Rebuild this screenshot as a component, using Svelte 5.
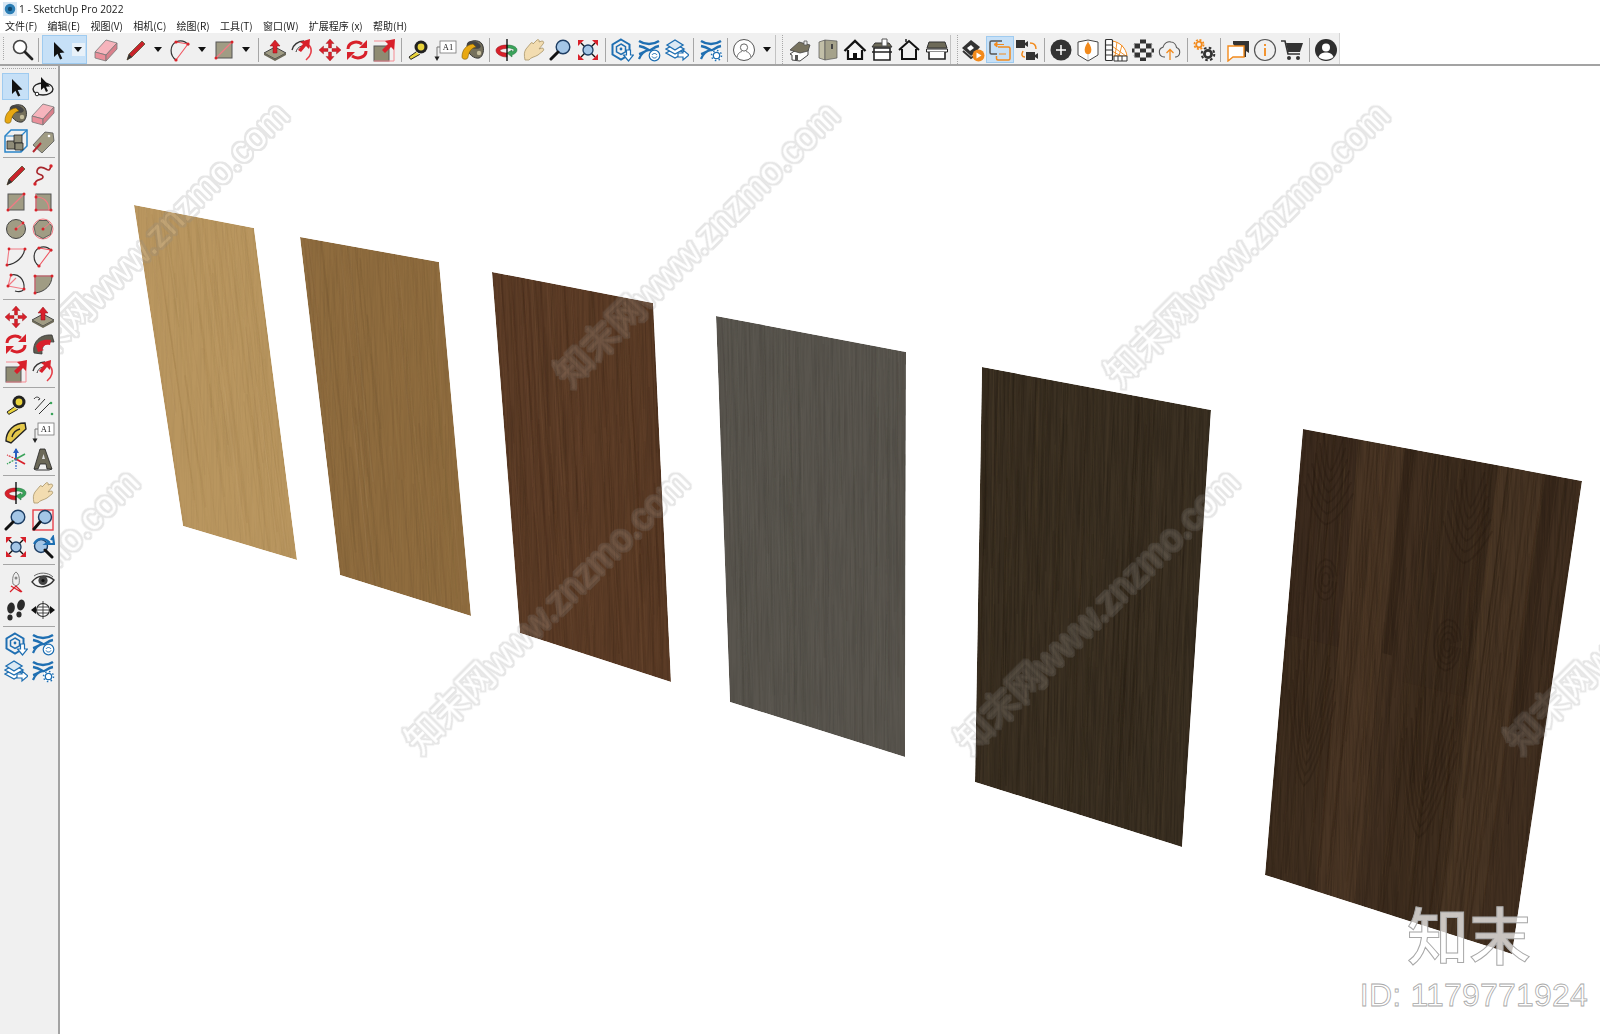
<script>
  const menus = ['文件(F)', '编辑(E)', '视图(V)', '相机(C)', '绘图(R)', '工具(T)', '窗口(W)', '扩展程序 (x)', '帮助(H)'];

  // '|' thin separator, '||' toolbar break, 'name+' has a dropdown caret
  const topbar = [
    'search', '|', 'select*', 'gap', 'eraser', 'nudge', 'pencil+', 'arcpie+', 'rect+', '|',
    'pushpull', 'followme', 'move', 'rotate', 'scale', '|',
    'tape', 'text', 'paint', '|',
    'orbit', 'hand', 'zoom', 'extents', '|',
    'wh', 'extx', 'layers', '|', 'extgear', '|', 'user+', '||',
    'house3d', 'slab', 'blackhouse', 'taghouse', 'outlinehouse', 'box', '|||',
    'eyeplay', 'swap!', 'cams', '|',
    'plus', 'shield', 'swatch', 'checker', 'cloud', '|',
    'gears', '|',
    'chat', 'info', 'cart', '|', 'avatar'
  ];

  const sidebar = [
    [['arrow', 'lookorbit'], ['paint', 'eraser'], ['component', 'tag']],
    [['pencil', 'freehand'], ['rect', 'rotrect'], ['circle', 'polygon'], ['arc2', 'arcpie'], ['arc3', 'pie']],
    [['move', 'pushpull'], ['rotate', 'followbody'], ['scale', 'followme']],
    [['tape', 'dim'], ['protractor', 'text'], ['axes', 'text3d']],
    [['orbit', 'hand'], ['zoom', 'zoomwin'], ['extents', 'prev']],
    [['walk', 'eye'], ['steps', 'section']],
    [['wh', 'extx'], ['layers', 'extgear']]
  ];

  function parse(item) {
    return { name: item.replace(/[+*!]/, ''), caret: item.endsWith('+'), active: item.endsWith('!') };
  }

  function random(seed) {
    let s = seed;
    return () => {
      s = (s + 0x6d2b79f5) | 0;
      let t = Math.imul(s ^ (s >>> 15), 1 | s);
      t = (t + Math.imul(t ^ (t >>> 7), 61 | t)) ^ t;
      return ((t ^ (t >>> 14)) >>> 0) / 4294967296;
    };
  }

  // bilinear position inside a panel: tl, tr, br, bl
  function at(q, u, v) {
    const tx = q[0][0] + (q[1][0] - q[0][0]) * u;
    const ty = q[0][1] + (q[1][1] - q[0][1]) * u;
    const bx = q[3][0] + (q[2][0] - q[3][0]) * u;
    const by = q[3][1] + (q[2][1] - q[3][1]) * u;
    return [tx + (bx - tx) * v, ty + (by - ty) * v];
  }

  function line(q, pts) {
    return pts.map((p, i) => (i ? 'L' : 'M') + at(q, p[0], p[1]).map((n) => n.toFixed(1)).join(' ')).join('');
  }

  function streaks(q, seed, count, dark, light, strength) {
    const r = random(seed);
    const out = [];
    for (let i = 0; i < count; i++) {
      const u = r();
      const v0 = r() < 0.5 ? 0 : r() * 0.7;
      const v1 = Math.min(1, v0 + 0.25 + r() * 0.8);
      const drift = (r() - 0.5) * 0.025;
      const pts = [];
      for (let k = 0; k <= 5; k++) {
        const t = k / 5;
        pts.push([u + drift * t + (r() - 0.5) * 0.005, v0 + (v1 - v0) * t]);
      }
      out.push({
        d: line(q, pts),
        color: r() < 0.65 ? dark : light,
        width: 0.4 + r() * 1.5,
        alpha: (0.06 + r() * 0.22) * strength
      });
    }
    return out;
  }

  function bandPath(q, u0, u1, v0, v1) {
    return line(q, [[u0, v0], [u1, v0], [u1, v1], [u0, v1]]) + 'Z';
  }

  const panels = [
    { id: 1, quad: [[134, 205], [254, 228], [297, 560], [183, 526]], base: '#b9965f', dark: '#94713f', light: '#cbab7b', n: 90, s: 0.6, grain: 0.03, seed: 11 },
    { id: 2, quad: [[300, 237], [439, 262], [471, 616], [340, 575]], base: '#8f6c3e', dark: '#6a4e2e', light: '#a1815a', n: 100, s: 0.65, grain: 0.05, seed: 27 },
    { id: 3, quad: [[492, 272], [653, 303], [671, 682], [520, 633]], base: '#5c3c26', dark: '#3f2717', light: '#704e36', n: 170, s: 0.9, grain: 0.1, seed: 43 },
    { id: 4, quad: [[716, 316], [906, 352], [905, 757], [730, 702]], base: '#59554e', dark: '#47443d', light: '#69655d', n: 190, s: 0.9, grain: 0.08, seed: 59 },
    { id: 5, quad: [[982, 367], [1211, 410], [1182, 847], [975, 782]], base: '#3b3022', dark: '#241c11', light: '#4e402d', n: 240, s: 1, grain: 0.16, seed: 71 },
    { id: 6, quad: [[1303, 429], [1582, 481], [1512, 954], [1265, 875]], base: '#412f20', dark: '#291c11', light: '#543f29', n: 220, s: 1, grain: 0.14, seed: 97 }
  ].map((p) => {
    const xs = p.quad.map((c) => c[0]);
    const ys = p.quad.map((c) => c[1]);
    return {
      ...p,
      points: p.quad.map((c) => c.join(',')).join(' '),
      box: { x: Math.min(...xs), y: Math.min(...ys), w: Math.max(...xs) - Math.min(...xs), h: Math.max(...ys) - Math.min(...ys) },
      lines: streaks(p.quad, p.seed, p.n, p.dark, p.light, p.s)
    };
  });

  // the walnut panel is laid in planks with cathedral figure
  const walnut = panels[5].quad;
  const planks = [
    { d: bandPath(walnut, 0, 0.2, 0, 0.46), fill: '#2f2216', alpha: 0.22 },
    { d: bandPath(walnut, 0.2, 0.36, 0, 1), fill: '#5f4a33', alpha: 0.26 },
    { d: bandPath(walnut, 0.365, 0.4, 0, 0.45), fill: '#20160c', alpha: 0.32 },
    { d: bandPath(walnut, 0.45, 0.7, 0, 0.5), fill: '#2b1f14', alpha: 0.22 },
    { d: bandPath(walnut, 0.7, 0.86, 0, 1), fill: '#5f4a33', alpha: 0.24 },
    { d: bandPath(walnut, 0.87, 0.91, 0, 0.55), fill: '#20160c', alpha: 0.3 },
    { d: bandPath(walnut, 0, 0.2, 0.46, 1), fill: '#382a1b', alpha: 0.18 },
    { d: bandPath(walnut, 0.45, 0.7, 0.5, 1), fill: '#2b1f14', alpha: 0.12 }
  ];

  function arches(uc, vTip, w, h, n) {
    const out = [];
    for (let k = 0; k < n; k++) {
      const wk = w * (0.35 + (k / n) * 0.65);
      const tip = vTip + k * 0.024;
      const pts = [];
      for (let s = -1; s <= 1.001; s += 0.2) {
        pts.push([uc + s * wk, tip - Math.pow(Math.abs(s), 1.6) * h]);
      }
      out.push(line(walnut, pts));
    }
    return out;
  }

  function knot(uc, vc, w, h, n) {
    const out = [];
    for (let k = 1; k <= n; k++) {
      const pts = [];
      for (let a = 0; a <= 6.3; a += 0.5) {
        pts.push([uc + Math.cos(a) * w * (k / n), vc + Math.sin(a) * h * (k / n)]);
      }
      out.push(line(walnut, pts));
    }
    return out;
  }

  const figure = [
    ...arches(0.11, 0.08, 0.1, 0.08, 6),
    ...arches(0.62, 0.1, 0.1, 0.08, 6),
    ...arches(0.12, 0.66, 0.1, 0.2, 6),
    ...arches(0.58, 0.7, 0.12, 0.2, 6),
    ...knot(0.13, 0.32, 0.04, 0.045, 3),
    ...knot(0.6, 0.4, 0.05, 0.055, 4)
  ];

  // watermark centres
  const marks = [
    [147, 244], [697, 244], [1247, 244],
    [-3, 611], [547, 611], [1097, 611], [1647, 611]
  ];
</script>

<svg class="defs" aria-hidden="true">
  <defs>
    <symbol id="search" viewBox="0 0 24 24"><circle cx="10" cy="9" r="6.5" fill="#fff" stroke="#444" stroke-width="1.6"/><path d="M15 14l7 7" stroke="#222" stroke-width="2.8" stroke-linecap="round"/></symbol>
    <symbol id="select" viewBox="0 0 24 24"><path d="M8 4v15l3.5-3.2 2.6 5.6 2.2-1-2.6-5.4 4.8-.4z" fill="#111"/></symbol>
    <symbol id="arrow" viewBox="0 0 24 24"><path d="M8 4v15l3.5-3.2 2.6 5.6 2.2-1-2.6-5.4 4.8-.4z" fill="#111"/></symbol>
    <symbol id="lookorbit" viewBox="0 0 24 24"><ellipse cx="12" cy="14" rx="10" ry="6" fill="none" stroke="#222" stroke-width="1.4"/><path d="M10 2v13l3-2.6 2 4.6 2-1-2-4.2 4-.4z" fill="#111"/><circle cx="6" cy="19" r="1.8" fill="#fff" stroke="#222"/></symbol>
    <symbol id="eraser" viewBox="0 0 24 24"><path d="M1 14 12 2l11 3-11 12z" fill="#f6b4bc" stroke="#777" stroke-width=".8"/><path d="M1 14l11 3v6L1 20z" fill="#ea8f9a" stroke="#777" stroke-width=".8"/><path d="M12 17 23 5v6L12 23z" fill="#d9808b" stroke="#777" stroke-width=".8"/></symbol>
    <symbol id="pencil" viewBox="0 0 24 24"><path d="M3 22l2-6L18 3l3 3L8 19z" fill="#c9232b" stroke="#553" stroke-width=".8"/><path d="M3 22l2-6 3 3z" fill="#333"/></symbol>
    <symbol id="freehand" viewBox="0 0 24 24"><path d="M4 21c0-6 8-3 8-7S5 13 6 8s6-4 9-2 4 1 5-3" fill="none" stroke="#a8262c" stroke-width="1.6"/><circle cx="4" cy="21" r="1.7" fill="#d8232a"/><circle cx="20" cy="3" r="1.7" fill="#d8232a"/></symbol>
    <symbol id="arcpie" viewBox="0 0 24 24"><path d="M8 22C1 17 2 7 8 4c4-2 9-1 13 3" fill="none" stroke="#333" stroke-width="1.2"/><path d="M8 22 20 6M8 4l12 2" stroke="#ef5560" stroke-width="1.1"/><circle cx="8" cy="22" r="1.6" fill="#d8232a"/><circle cx="8" cy="4" r="1.6" fill="#d8232a"/><circle cx="20" cy="6" r="1.6" fill="#d8232a"/></symbol>
    <symbol id="rect" viewBox="0 0 24 24"><rect x="4" y="4" width="16" height="16" fill="#a09c84" stroke="#555"/><path d="M4 20 20 4" stroke="#f27a84" stroke-width="1.2"/><circle cx="4" cy="20" r="1.5" fill="#d8232a"/><circle cx="20" cy="4" r="1.5" fill="#d8232a"/></symbol>
    <symbol id="rotrect" viewBox="0 0 24 24"><rect x="5" y="4" width="15" height="16" fill="#a09c84" stroke="#555"/><path d="M5 7c8 0 13 5 13 13M5 4v16h15" fill="none" stroke="#f27a84" stroke-width="1.2"/><circle cx="5" cy="7" r="1.5" fill="#d8232a"/><circle cx="5" cy="20" r="1.5" fill="#d8232a"/><circle cx="20" cy="20" r="1.5" fill="#d8232a"/></symbol>
    <symbol id="circle" viewBox="0 0 24 24"><circle cx="12" cy="12" r="9.5" fill="#a09c84" stroke="#444"/><path d="M12 12l7-6" stroke="#f27a84" stroke-width="1.2"/><circle cx="12" cy="12" r="1.5" fill="#d8232a"/><circle cx="19" cy="6" r="1.4" fill="#d8232a"/></symbol>
    <symbol id="polygon" viewBox="0 0 24 24"><circle cx="12" cy="12" r="10" fill="#e8dcd4" stroke="#f27a84"/><path d="M8 3.5l8 0 5 6-1.5 8-7.5 4-7.5-4-1.5-8z" fill="#a09c84" stroke="#444" stroke-width=".8"/><path d="M12 12l7-6" stroke="#f27a84"/><circle cx="12" cy="12" r="1.5" fill="#d8232a"/></symbol>
    <symbol id="arc2" viewBox="0 0 24 24"><path d="M3 21C12 20 20 13 21 4" fill="none" stroke="#333" stroke-width="1.2"/><path d="M3 21 5 5h16" fill="none" stroke="#f27a84" stroke-width="1.1"/><circle cx="3" cy="21" r="1.5" fill="#d8232a"/><circle cx="5" cy="5" r="1.4" fill="#d8232a"/><circle cx="21" cy="5" r="1.5" fill="#d8232a"/></symbol>
    <symbol id="arc3" viewBox="0 0 24 24"><path d="M7 4c7-2 14 4 13 14-2 3-6 3-9 2" fill="none" stroke="#333" stroke-width="1.2"/><path d="M4 15 7 4M4 15l16 3M4 15l8-8" stroke="#f27a84" stroke-width="1.1"/><circle cx="7" cy="4" r="1.5" fill="#d8232a"/><circle cx="4" cy="15" r="1.5" fill="#d8232a"/><circle cx="20" cy="18" r="1.5" fill="#d8232a"/></symbol>
    <symbol id="pie" viewBox="0 0 24 24"><path d="M4 5h17c0 9-7 16-17 17z" fill="#a09c84" stroke="#444"/><path d="M4 5h17M4 5v17" stroke="#f27a84" stroke-width="1.1"/><circle cx="4" cy="5" r="1.5" fill="#d8232a"/><circle cx="21" cy="5" r="1.5" fill="#d8232a"/><circle cx="4" cy="22" r="1.5" fill="#d8232a"/></symbol>
    <symbol id="pushpull" viewBox="0 0 24 24"><path d="M1 15l11-6 11 6-11 6z" fill="#a09c84" stroke="#444"/><path d="M1 15v2l11 6 11-6v-2l-11 6z" fill="#6d6a58"/><path d="M12 2l5 6h-3v7h-4V8H7z" fill="#d8202a" stroke="#8d1018" stroke-width=".5"/></symbol>
    <symbol id="followme" viewBox="0 0 24 24"><path d="M2 12C3 7 8 3 14 3" fill="none" stroke="#333" stroke-width="1.3"/><path d="M6 14c1-4 4-6 7-6" fill="none" stroke="#333"/><path d="M19 7c4 5 2 11-3 15" fill="none" stroke="#e6404a" stroke-width="1.6"/><path d="M20 1l-1 10-3-3-5 6-3-2 5-6-3-2z" fill="#d8202a"/></symbol>
    <symbol id="followbody" viewBox="0 0 24 24"><path d="M3 21C1 10 9 2 21 3l2 7C15 9 10 14 11 22z" fill="#5f5d50" stroke="#333" stroke-width=".8"/><path d="M5 14c2-4 6-7 15-6l-1 5c-5-1-7 1-8 4l2 1-6 2z" fill="#d8202a"/></symbol>
    <symbol id="move" viewBox="0 0 24 24"><g fill="#d8202a" stroke="#93131a" stroke-width=".4"><path d="M12 1l4 4.500h-2.500v4.500h-3V5.500H8z"/><path d="M12 1l4 4.500h-2.500v4.500h-3V5.500H8z" transform="rotate(90 12 12)"/><path d="M12 1l4 4.500h-2.500v4.500h-3V5.500H8z" transform="rotate(180 12 12)"/><path d="M12 1l4 4.500h-2.500v4.500h-3V5.500H8z" transform="rotate(270 12 12)"/></g></symbol>
    <symbol id="rotate" viewBox="0 0 24 24"><g fill="#d8202a"><path d="M3 11c0-6 8-9 14-5" fill="none" stroke="#d8202a" stroke-width="3"/><path d="M22 2v8h-8z"/><path d="M21 13c0 6-8 9-14 5" fill="none" stroke="#d8202a" stroke-width="3"/><path d="M2 22v-8h8z"/></g></symbol>
    <symbol id="scale" viewBox="0 0 24 24"><rect x="2" y="8" width="15" height="15" fill="#8e8b72" stroke="#555"/><path d="M2 3h20v20H2" fill="none" stroke="#f58a92" stroke-width="1"/><path d="M23 1l-1 11-3-3-6 6-3-3 6-6-3-3z" fill="#d8202a"/></symbol>
    <symbol id="tape" viewBox="0 0 24 24"><circle cx="15" cy="9" r="6.5" fill="#222"/><circle cx="15" cy="9" r="3.4" fill="#e9d33b"/><path d="M10 14l-7 5 1.8 2.4 9-5" fill="#e9d33b" stroke="#222" stroke-width="1"/></symbol>
    <symbol id="text" viewBox="0 0 24 24"><rect x="7" y="3" width="16" height="12" fill="#fff" stroke="#777" stroke-width=".8"/><text x="15" y="12.4" font-family="Liberation Serif, serif" font-size="8.5" text-anchor="middle" fill="#222">A1</text><path d="M4 9h3M4 9v10" stroke="#777" fill="none"/><path d="M1.5 18.5h5L4 23z" fill="#222"/></symbol>
    <symbol id="paint" viewBox="0 0 24 24"><path d="M6 7c2-5 12-6 15-1s1 13-3 14-12-3-12-13z" fill="#75705c" stroke="#333"/><ellipse cx="13" cy="7" rx="7" ry="3.5" fill="#444" transform="rotate(15 13 7)"/><path d="M1 19C1 12 5 7 12 6l3 3c-5 1-7 5-8 10 0 3-6 3-6 0z" fill="#e8a812" stroke="#7a5b07" stroke-width=".6"/><circle cx="18" cy="15" r="2.2" fill="#c4bd9c"/></symbol>
    <symbol id="orbit" viewBox="0 0 24 24"><path d="M12 7c6 0 10 2 10 5 0 2-2 4-5 5v2l-5-4 5-3v2c1-1 2-1 2-2 0-1-3-2-7-2z" fill="#3aa35a" stroke="#1f6e38" stroke-width=".5"/><path d="M12 7C6 7 1 9 1 12.500S6 19 12 19v-4c-3 0-7-1-7-2.500 0-1 3-2 7-2z" fill="#d8202a" stroke="#8d1018" stroke-width=".5"/><path d="M12 1v22" stroke="#111" stroke-width="1.400"/></symbol>
    <symbol id="hand" viewBox="0 0 24 24"><path d="M3 22C2 17 2 14 4 11l5-6c1-1 2 0 2 1l4-4c1-1 3 0 2 2l3-1c2 0 2 2 1 3l-4 5 3-1c2 0 2 2 1 3l-5 4c-3 2-7 2-9 5z" fill="#f2dcb0" stroke="#a89468" stroke-width=".8"/></symbol>
    <symbol id="zoom" viewBox="0 0 24 24"><circle cx="14" cy="9" r="6.8" fill="#a4c6e6" stroke="#1d3d63" stroke-width="1.4"/><path d="M9 14l-7 7" stroke="#111" stroke-width="3" stroke-linecap="round"/></symbol>
    <symbol id="zoomwin" viewBox="0 0 24 24"><rect x="2" y="2" width="20" height="20" fill="none" stroke="#e6404a" stroke-width="1.4"/><circle cx="14" cy="9" r="6.5" fill="#a4c6e6" stroke="#1d3d63" stroke-width="1.4"/><path d="M9 14l-6 7" stroke="#111" stroke-width="3" stroke-linecap="round"/></symbol>
    <symbol id="extents" viewBox="0 0 24 24"><path d="M5 5l14 14M19 5 5 19" stroke="#111" stroke-width="1.4"/><circle cx="12" cy="12" r="5" fill="#a4c6e6" stroke="#1d3d63" stroke-width="1.3"/><g fill="#d8202a"><path d="M2 2h6L2 8z"/><path d="M22 2h-6l6 6z"/><path d="M2 22h6l-6-6z"/><path d="M22 22h-6l6-6z"/></g></symbol>
    <symbol id="prev" viewBox="0 0 24 24"><circle cx="10" cy="11" r="6.5" fill="#a4c6e6" stroke="#1d3d63" stroke-width="1.4"/><path d="M14 15l7 7" stroke="#111" stroke-width="3" stroke-linecap="round"/><path d="M3 9C6 3 13 2 18 7l-3 2h8l-1-7-2 3" fill="none" stroke="#1d6fb2" stroke-width="2.2"/></symbol>
    <symbol id="wh" viewBox="0 0 24 24"><path d="M11 1.5l8.5 5v10L11 21.5l-8.5-5v-10z" fill="none" stroke="#1f6fb2" stroke-width="2"/><path d="M11 6l4.500 2.600v5.200L11 16.500l-4.500-2.700V8.600z" fill="none" stroke="#1f6fb2" stroke-width="1.500"/><circle cx="11" cy="11" r="1.400" fill="#1f6fb2"/><path d="M16.500 12h4v5h3l-5 6-5-6h3z" fill="#fff" stroke="#1f6fb2" stroke-width="1.200"/></symbol>
    <symbol id="extx" viewBox="0 0 24 24"><g fill="none" stroke="#1f6fb2"><path d="M2 3c6 4 14 4 20 0" stroke-width="2.400"/><path d="M2 8c6 1 8 3 10 4s4-3 10-4" stroke-width="2.400"/><path d="M2 21c2-5 5-8 10-9-5 1-6 3-10 4" stroke-width="2.200"/></g><circle cx="17.500" cy="17.500" r="5.300" fill="#fff" stroke="#1f6fb2" stroke-width="1.200"/><path d="M15 17c1-2 4-2 5 0M20 18.500c-1 2-4 2-5 0" fill="none" stroke="#1f6fb2"/></symbol>
    <symbol id="extgear" viewBox="0 0 24 24"><g fill="none" stroke="#1f6fb2"><path d="M2 3c6 4 14 4 20 0" stroke-width="2.400"/><path d="M2 8c6 1 8 3 10 4s4-3 10-4" stroke-width="2.400"/><path d="M2 21c2-5 5-8 10-9-5 1-6 3-10 4" stroke-width="2.200"/></g><circle cx="17.500" cy="17.500" r="5.800" fill="#fff"/><circle cx="17.500" cy="17.500" r="3.200" fill="#fff" stroke="#1f6fb2" stroke-width="1.300"/><circle cx="17.500" cy="17.500" r="5" fill="none" stroke="#1f6fb2" stroke-width="1.500" stroke-dasharray="1.600 2.300"/></symbol>
    <symbol id="layers" viewBox="0 0 24 24"><g fill="#fff" stroke="#1f6fb2" stroke-width="1.400"><path d="M1 15l9-5 9 5-9 5z"/><path d="M1 11l9-5 9 5-9 5z"/><path d="M2 7l8-5 8 5-8 5z" fill="#dbe9f4"/></g><path d="M13 15h5v-3l6 5-6 5v-3h-5z" fill="#fff" stroke="#1f6fb2" stroke-width="1.200"/></symbol>
    <symbol id="user" viewBox="0 0 24 24"><circle cx="12" cy="12" r="10.500" fill="#fff" stroke="#555" stroke-width="1"/><circle cx="12" cy="9.500" r="3.600" fill="none" stroke="#666"/><path d="M5 19c1-4 3-5 5-5.500M19 19c-1-4-3-5-5-5.500" fill="none" stroke="#666"/></symbol>
    <symbol id="house3d" viewBox="0 0 24 24"><path d="M8 12l-6 4 2 1v5l8 1 8-6v-6z" fill="#fff" stroke="#444"/><path d="M2 12 11 4l11 3-2 6-8 2z" fill="#77725e" stroke="#444" stroke-width=".8"/><path d="M16 3h3v4h-3z" fill="#eee" stroke="#555" stroke-width=".8"/><path d="M7 17h3v5H7z" fill="#555"/></symbol>
    <symbol id="slab" viewBox="0 0 24 24"><path d="M3 4l6-2v20l-6-2z" fill="#c2bfa8" stroke="#555" stroke-width=".7"/><path d="M9 2l12 1v17l-12 2z" fill="#a5a28b" stroke="#555" stroke-width=".7"/><path d="M15 6h2v5h-2z" fill="#444"/></symbol>
    <symbol id="blackhouse" viewBox="0 0 24 24"><path d="M1.500 13 12 3l10.500 10" fill="none" stroke="#111" stroke-width="2.400"/><path d="M5 12v9h14v-9" fill="#fff" stroke="#111" stroke-width="2.200"/><path d="M10 15h4v6h-4z" fill="#111"/></symbol>
    <symbol id="taghouse" viewBox="0 0 24 24"><path d="M2 9l3-4h14l3 4z" fill="#6d6a58" stroke="#333"/><path d="M4 10h16v12H4zM2 14h20" fill="#fff" stroke="#222" stroke-width="1.600"/><path d="M12 1h5v7h-5z" fill="#fff" stroke="#555"/></symbol>
    <symbol id="outlinehouse" viewBox="0 0 24 24"><path d="M2 12 12 3l10 9" fill="none" stroke="#111" stroke-width="2"/><path d="M5 11v10h14V11" fill="none" stroke="#111" stroke-width="2"/><path d="M9 1v3" stroke="#111" stroke-width="1.400"/></symbol>
    <symbol id="box" viewBox="0 0 24 24"><path d="M2 10l2-6h16l2 6z" fill="#6d6a58" stroke="#333"/><path d="M1.500 11h21v3h-21z" fill="#fff" stroke="#222"/><path d="M4 14v7h16v-7" fill="#fff" stroke="#222" stroke-width="1.600"/></symbol>
    <symbol id="eyeplay" viewBox="0 0 24 24"><path d="M1 10l9-8 9 7-5 6-4 3z" fill="#333"/><path d="M6 10l4-3 3 3-4 3z" fill="#fff"/><path d="M2 13l8 7 3-2" fill="none" stroke="#333" stroke-width="2"/><circle cx="17.500" cy="17.500" r="6" fill="#f28a1c"/><path d="M15.500 14.500v6l5-3z" fill="#fff"/></symbol>
    <symbol id="swap" viewBox="0 0 24 24"><path d="M14 3H3.500a1.500 1.500 0 0 0-1.500 1.500v10a1.500 1.500 0 0 0 1.500 1.500H9" fill="none" stroke="#555" stroke-width="1.500"/><path d="M10 9h10.500a1.500 1.500 0 0 1 1.500 1.500v10a1.500 1.500 0 0 1-1.500 1.500H10a1.500 1.500 0 0 1-1.500-1.500V18" fill="none" stroke="#f28a1c" stroke-width="1.500"/><path d="M6 6.500 9 4v5zM18 16h-7" fill="#f28a1c" stroke="#f28a1c"/><path d="M9 6.500h7" stroke="#f28a1c"/></symbol>
    <symbol id="cams" viewBox="0 0 24 24"><path d="M1 2h9v8H1zM10 5l3-2v6l-3-2z" fill="#333"/><path d="M11 14h9v8h-9zM20 17l3-2v6l-3-2z" fill="#333"/><path d="M15 5c4 0 6 2 6 6M8 13c-2 4-1 6 2 6" fill="none" stroke="#f28a1c" stroke-width="1.500"/></symbol>
    <symbol id="plus" viewBox="0 0 24 24"><circle cx="12" cy="12" r="10.500" fill="#333"/><path d="M12 7v10M7 12h10" stroke="#fff" stroke-width="1.500"/></symbol>
    <symbol id="shield" viewBox="0 0 24 24"><path d="M2 4l10-2 10 2v13l-10 6-10-6z" fill="#fff" stroke="#444" stroke-width="1"/><path d="M12 2v21" stroke="#888" stroke-width=".5"/><path d="M12 4c3 4 4 7 3 10s-5 3-6 0 0-6 3-10z" fill="#f28a1c"/></symbol>
    <symbol id="swatch" viewBox="0 0 24 24"><path d="M8 3c8 1 14 7 15 15H8z" fill="#fff" stroke="#f28a1c"/><path d="M8 8l14 10M8 13l9 5M13 4l-2 14M18 7l-3 11" stroke="#f28a1c" stroke-width=".9"/><rect x="1.500" y="1.500" width="7" height="21" rx="1" fill="#fff" stroke="#333" stroke-width="1.200"/><path d="M1.500 7h7M1.500 12h7M1.500 17h7" stroke="#333"/><path d="M10 18h13v5H10z" fill="#fff" stroke="#333"/><path d="M14 18v5M18 18v5" stroke="#333"/></symbol>
    <symbol id="checker" viewBox="0 0 24 24"><path d="M9 1.500h6v4H9zM3.500 5.500H9v5H3.500zM15 5.500h5.500v5H15zM9 10.500h6v4H9zM1 10.500h2.500v4H1zM20.500 10.500H23v4h-2.500zM3.500 14.500H9v5H3.500zM15 14.500h5.500v5H15zM9 19.500h6v3.500H9z" fill="#333"/><path d="M4 5 3 7M20 5l1 2M4 19l-1-2M20 19l1-2" stroke="#888"/></symbol>
    <symbol id="cloud" viewBox="0 0 24 24"><path d="M7 19H6a5 5 0 0 1-1-9.800C6 5 10 3 13 4c3 0 5 3 5.500 5.500A5 5 0 0 1 18 19h-1" fill="none" stroke="#555" stroke-width="1.100"/><path d="M12 22v-10M8.500 15l3.500-3.500 3.500 3.500" fill="none" stroke="#f28a1c" stroke-width="1.300"/></symbol>
    <symbol id="gears" viewBox="0 0 24 24"><circle cx="7" cy="6.500" r="2.800" fill="none" stroke="#f28a1c" stroke-width="1.800"/><circle cx="7" cy="6.500" r="4.600" fill="none" stroke="#f28a1c" stroke-width="1.700" stroke-dasharray="2 1.600"/><circle cx="16" cy="16" r="3.600" fill="none" stroke="#333" stroke-width="2.800"/><circle cx="16" cy="16" r="6.300" fill="none" stroke="#333" stroke-width="2" stroke-dasharray="2.600 2.350"/></symbol>
    <symbol id="chat" viewBox="0 0 24 24"><path d="M7 6V3h16v12l-3-2v6h-2z" fill="#333"/><path d="M2 8h16v11H7l-5 4z" fill="#fff" stroke="#f28a1c" stroke-width="1.400"/></symbol>
    <symbol id="info" viewBox="0 0 24 24"><circle cx="12" cy="12" r="10.500" fill="none" stroke="#555" stroke-width="1.200"/><path d="M12 10v8M12 6v2" stroke="#f28a1c" stroke-width="1.800"/></symbol>
    <symbol id="cart" viewBox="0 0 24 24"><path d="M1 3h4l3 13h12" fill="none" stroke="#333" stroke-width="1.600"/><path d="M6 5h17l-3 9H8z" fill="#333"/><circle cx="9" cy="20" r="2" fill="#333"/><circle cx="18" cy="20" r="2" fill="#333"/></symbol>
    <symbol id="avatar" viewBox="0 0 24 24"><circle cx="12" cy="12" r="11" fill="#2e2e2e"/><circle cx="12" cy="9.500" r="4" fill="#fff"/><path d="M4.500 19c1.500-3.500 4-4.500 7.500-4.500s6 1 7.500 4.500c-4 3.500-11 3.500-15 0z" fill="#fff"/></symbol>
    <symbol id="component" viewBox="0 0 24 24"><path d="M7 1h16v16l-6 6H1V7z" fill="none" stroke="#2a84c8" stroke-width="1.500"/><path d="M1 7h16v16M17 7l6-6" fill="none" stroke="#2a84c8" stroke-width="1.200"/><g fill="#8f8c78" stroke="#222" stroke-width=".8"><path d="M3 12h8v8H3z"/><path d="M10 6h8v8h-8z"/><path d="M11 14h8v7h-8z"/></g></symbol>
    <symbol id="tag" viewBox="0 0 24 24"><path d="M2 16 14 3l8 1 1 8-12 12z" fill="#a09c84" stroke="#555" stroke-width=".8"/><circle cx="18" cy="7" r="1.300" fill="#fff"/><path d="M2 23 10 14" stroke="#b3262d" stroke-width="2"/></symbol>
    <symbol id="dim" viewBox="0 0 24 24"><path d="M4 17 14 6M8 21 19 10" fill="none" stroke="#333"/><path d="M3 6c2-3 5-2 6 0l-2 1" fill="none" stroke="#333"/><circle cx="20" cy="10" r="1.300" fill="#3aa35a"/><circle cx="21" cy="21" r="1.300" fill="#3aa35a"/></symbol>
    <symbol id="protractor" viewBox="0 0 24 24"><path d="M2 21C2 11 10 3 21 3l1 6L7 23z" fill="#e4c84a" stroke="#222" stroke-width="1.400"/><path d="M8 17c1-4 4-7 8-8" fill="none" stroke="#222" stroke-width="1.400"/></symbol>
    <symbol id="axes" viewBox="0 0 24 24"><path d="M12 12V2" stroke="#2a5fc0" stroke-width="2"/><path d="M12 1l3 5H9z" fill="#2a5fc0"/><path d="M12 12l9 5" stroke="#d8202a" stroke-width="1.800"/><path d="M12 12l-9 5" stroke="#3aa35a" stroke-width="1.300" stroke-dasharray="2 1"/><path d="M12 12l9-5" stroke="#3aa35a" stroke-width="1.500"/><path d="M12 12l-9-4" stroke="#d8202a" stroke-width="1.200" stroke-dasharray="2 1"/><path d="M12 12v10" stroke="#2a5fc0" stroke-width="1.200" stroke-dasharray="2 1"/></symbol>
    <symbol id="text3d" viewBox="0 0 24 24"><path d="M9 2h5l7 20h-5l-1-5H9l-2 5H3z" fill="#6b6858" stroke="#222" stroke-width=".8"/><path d="M11 12h3l-1.500-5z" fill="#ddd"/><path d="M3 22l2 1h13l3-1" fill="none" stroke="#333"/></symbol>
    <symbol id="walk" viewBox="0 0 24 24"><path d="M12 1c3 2 4 7 3 12l-3 2-3-2C8 8 9 3 12 1z" fill="#eee" stroke="#666" stroke-width=".8"/><circle cx="12" cy="7" r="1.500" fill="#888"/><path d="M6 21l6-6 6 6M7 15l10 6" fill="none" stroke="#d8202a" stroke-width="1.200"/></symbol>
    <symbol id="eye" viewBox="0 0 24 24"><path d="M1 11C6 4 16 3 23 9c-4 6-13 9-19 5z" fill="#f4f4f4" stroke="#333" stroke-width="1.400"/><circle cx="12" cy="9.500" r="4.600" fill="#444"/><circle cx="12" cy="9.500" r="1.600" fill="#111"/><path d="M3 5C8 1 17 1 22 6" fill="none" stroke="#666"/></symbol>
    <symbol id="steps" viewBox="0 0 24 24"><g fill="#2b2b2b"><ellipse cx="7" cy="10" rx="3.800" ry="5.500" transform="rotate(10 7 10)"/><ellipse cx="6" cy="19.500" rx="2.600" ry="3"/><ellipse cx="17" cy="7" rx="3.800" ry="5.500" transform="rotate(15 17 7)"/><ellipse cx="15" cy="16.500" rx="2.600" ry="3"/></g></symbol>
    <symbol id="section" viewBox="0 0 24 24"><circle cx="12" cy="12" r="6.500" fill="#fff" stroke="#333" stroke-width="1.200"/><path d="M12 3v18M1 12h22M6 9h12M6 15h12" stroke="#333" stroke-width=".9"/><path d="M19 8l5 4-5 4z" fill="#111"/><path d="M5 8l-5 4 5 4z" fill="#111"/></symbol>
  </defs>
</svg>

<div class="window">
  <div class="titlebar">
    <svg class="app-icon" viewBox="0 0 16 16"><rect width="16" height="16" fill="#d6e6f3"/><circle cx="8" cy="8" r="6" fill="#2b7eb5"/><circle cx="8" cy="8" r="2.500" fill="#12486d"/></svg>
    <span>1 - SketchUp Pro 2022</span>
  </div>

  <nav class="menubar">
    {#each menus as menu}
      <span>{menu}</span>
    {/each}
  </nav>

  <div class="toolbar">
    <i class="grip"></i>
    {#each topbar as item}
      {#if item === '|'}
        <i class="sep"></i>
      {:else if item === '||'}
        <i class="break"></i>
      {:else if item === '|||'}
        <i class="break tight"></i>
      {:else if item === 'gap'}
        <i class="gap"></i>
      {:else if item === 'nudge'}
        <i class="nudge"></i>
      {:else if item === 'select*'}
        <div class="combo">
          <svg class="icon"><use href="#select" /></svg>
          <span class="caret-box"><i class="caret"></i></span>
        </div>
      {:else}
        {@const tool = parse(item)}
        <div class="tool" class:active={tool.active}>
          <svg class="icon"><use href="#{tool.name}" /></svg>
        </div>
        {#if tool.caret}
          <span class="caret-slot"><i class="caret"></i></span>
        {/if}
      {/if}
    {/each}
  </div>

  <main class="workspace">
    <aside class="sidebar">
      <i class="grip-h"></i>
      {#each sidebar as group, g}
        {#if g > 0}
          <i class="side-sep" class:roomy={g === 5}></i>
        {/if}
        <div class="side-group">
          {#each group as row, r}
            {#each row as name, c}
              <div class="side-tool" class:active={g === 0 && r === 0 && c === 0}>
                <svg class="icon"><use href="#{name}" /></svg>
              </div>
            {/each}
          {/each}
        </div>
      {/each}
    </aside>

    <div class="canvas">
      <svg class="scene" viewBox="60 64 1540 970">
        <defs>
          <filter id="grain" x="0" y="0" width="100%" height="100%">
            <feTurbulence type="fractalNoise" baseFrequency="0.55 0.015" numOctaves="3" seed="5" />
            <feColorMatrix type="matrix" values="0 0 0 0 0  0 0 0 0 0  0 0 0 0 0  2.4 0 0 0 -0.9" />
          </filter>
          <filter id="mark" x="-5%" y="-5%" width="110%" height="110%">
            <feMorphology in="SourceAlpha" operator="dilate" radius="1.500" result="fat" />
            <feComposite in="fat" in2="SourceAlpha" operator="out" result="ring" />
            <feFlood flood-color="#8c8c8c" flood-opacity="0.22" />
            <feComposite in2="ring" operator="in" result="edge" />
            <feFlood flood-color="#ffffff" flood-opacity="0.14" />
            <feComposite in2="SourceAlpha" operator="in" result="face" />
            <feMerge result="all"><feMergeNode in="edge" /><feMergeNode in="face" /></feMerge>
            <feGaussianBlur in="all" stdDeviation="0.4" />
          </filter>
          {#each panels as p}
            <clipPath id="clip{p.id}"><polygon points={p.points} /></clipPath>
          {/each}
        </defs>

        {#each panels as p}
          <g clip-path="url(#clip{p.id})">
            <polygon points={p.points} fill={p.base} />
            {#if p.id === 6}
              {#each planks as plank}
                <path d={plank.d} fill={plank.fill} opacity={plank.alpha} />
              {/each}
            {/if}
            {#each p.lines as l}
              <path d={l.d} fill="none" stroke={l.color} stroke-width={l.width} opacity={l.alpha} />
            {/each}
            {#if p.id === 6}
              {#each figure as d}
                <path {d} fill="none" stroke="#21160c" stroke-width="1.800" opacity="0.24" />
              {/each}
            {/if}
            <rect x={p.box.x} y={p.box.y} width={p.box.w} height={p.box.h} filter="url(#grain)" opacity={p.grain} />
          </g>
        {/each}

        <g filter="url(#mark)">
          {#each marks as [x, y]}
            <text class="mark" transform="translate({x} {y}) rotate(-45)" text-anchor="middle" dominant-baseline="central">知末网www.znzmo.com</text>
          {/each}
        </g>

        <text class="stamp-cn" x="1469" y="960" text-anchor="middle">知末</text>
        <text class="stamp-id" x="1588" y="1006" text-anchor="end">ID: 1179771924</text>
      </svg>
    </div>
  </main>
</div>

<style>
  :global(body) { background: #fff; overflow: hidden; }

  .defs { position: absolute; width: 0; height: 0; }

  .window {
    display: flex;
    flex-direction: column;
    height: 1034px;
    font-family: "Noto Sans CJK SC", "Liberation Sans", sans-serif;
    color: #1a1a1a;
  }

  .titlebar {
    display: flex;
    align-items: center;
    gap: 2px;
    height: 18px;
    padding-left: 3px;
    font-family: "Open Sans", "Liberation Sans", sans-serif;
    font-size: 10.2px;
    filter: blur(0.3px);
  }
  .app-icon { width: 14px; height: 14px; }

  .menubar {
    display: flex;
    gap: 10.25px;
    align-items: center;
    height: 15px;
    padding-left: 5px;
    font-size: 10px;
    filter: blur(0.3px);
  }

  .toolbar {
    display: flex;
    align-items: center;
    width: 1340px;
    height: 31px;
    padding: 2px 0 0 8px;
    box-sizing: border-box;
    background: #f0f0f0;
    border-right: 1px solid #d4d4d4;
    position: relative;
  }
  .workspace::before {
    content: "";
    position: absolute;
    left: 0; right: 0; top: 0;
    height: 2px;
    background: #a3a3a3;
  }
  .grip {
    position: absolute;
    left: 3px; top: 4px; bottom: 4px;
    border-left: 1px dotted #a8a8a8;
  }

  .tool, .side-tool {
    display: flex;
    align-items: center;
    justify-content: center;
    flex: none;
    box-sizing: border-box;
  }
  .tool { width: 27.3px; height: 27px; }
  .side-tool { width: 27px; height: 27px; }
  .active {
    background: #c6e0f7;
    outline: 1px solid #9fcbf0;
    outline-offset: -1px;
  }
  .icon { width: 24px; height: 24px; filter: blur(0.25px); }

  .sep {
    flex: none;
    width: 1px;
    height: 24px;
    margin: 0 2.75px;
    background: #a6a6a6;
  }
  .break {
    flex: none;
    width: 6px;
    height: 29px;
    margin-right: 3.600px;
    border-left: 1px solid #c2c2c2;
    border-right: 1px dotted #a8a8a8;
  }
  .break.tight { margin-right: 0.600px; }
  .gap { flex: none; width: 6px; }
  .nudge { flex: none; width: 2px; }

  .combo {
    display: flex;
    align-items: center;
    flex: none;
    width: 45px;
    height: 29px;
    box-sizing: border-box;
    background: #c6e0f7;
    border: 1px solid #9fcbf0;
  }
  .combo .icon { margin-left: 3px; }
  .caret-box {
    display: flex;
    align-items: center;
    justify-content: center;
    width: 13px;
    height: 13px;
    margin-left: 2px;
    background: #e8f1f9;
  }
  .caret-slot {
    display: flex;
    justify-content: center;
    flex: none;
    width: 17px;
  }
  .caret {
    display: block;
    width: 0;
    height: 0;
    border-style: solid;
    border-width: 5px 4.500px 0;
    border-color: #111 transparent transparent;
  }

  .workspace {
    flex: 1;
    display: flex;
    min-height: 0;
    position: relative;
  }

  .sidebar {
    flex: none;
    width: 60px;
    box-sizing: border-box;
    padding: 2px 0 0 2px;
    margin-top: 2px;
    background: #f0f0f0;
    border-right: 2px solid #a3a3a3;
  }
  .grip-h {
    display: block;
    height: 0;
    margin: 0 2px 4px 0;
    border-top: 1px dotted #a8a8a8;
  }
  .side-group {
    display: grid;
    grid-template-columns: 27px 27px;
  }
  .side-sep {
    display: block;
    height: 1px;
    margin: 3px 3px 3px 1px;
    background: #a6a6a6;
  }
  .side-sep.roomy { margin: 4px 3px 4px 1px; }

  .canvas {
    flex: 1;
    min-width: 0;
    background: #fff;
  }
  .scene { display: block; width: 1540px; height: 970px; }

  .mark {
    font-family: "Liberation Sans", "Noto Sans CJK SC", sans-serif;
    font-size: 36.500px;
  }
  .stamp-cn {
    font-family: "Noto Sans CJK SC", sans-serif;
    font-size: 62px;
    font-weight: 500;
    fill: rgba(255, 255, 255, 0.72);
    stroke: #a8a8a8;
    stroke-width: 1;
  }
  .stamp-id {
    font-family: "Liberation Sans", sans-serif;
    font-size: 32px;
    letter-spacing: 0.2px;
    fill: rgba(255, 255, 255, 0.72);
    stroke: #a8a8a8;
    stroke-width: 0.8;
  }
</style>
